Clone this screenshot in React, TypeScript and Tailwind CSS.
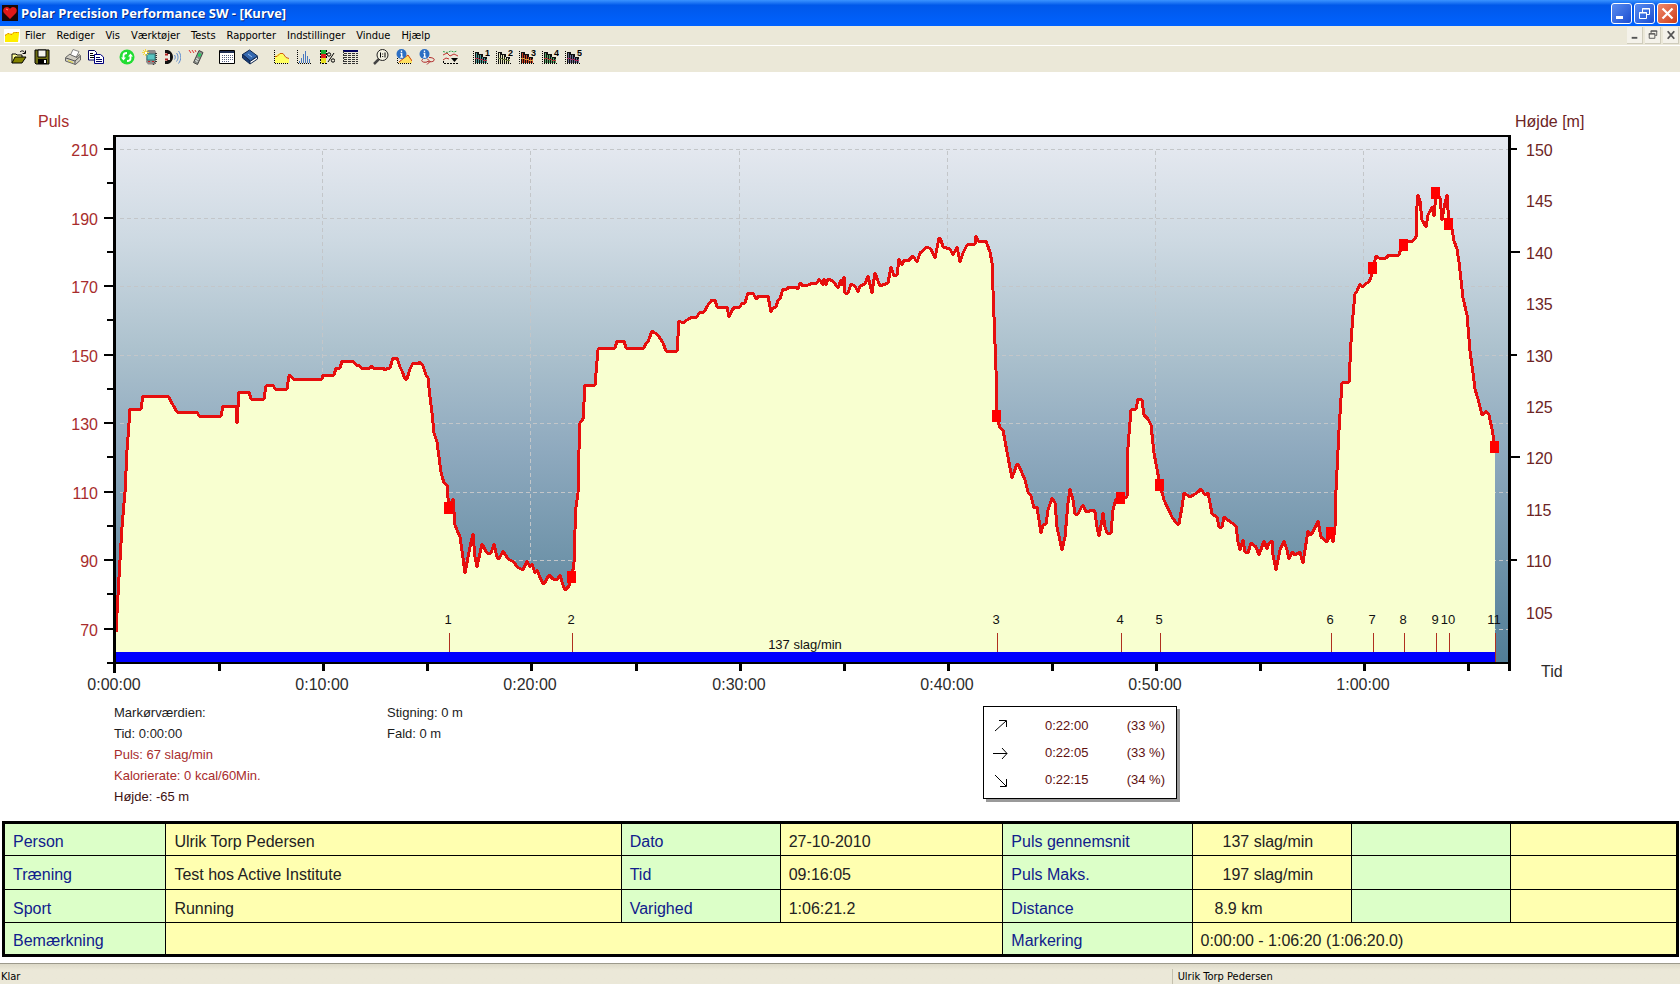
import React from 'react';

interface ToolButton {
  label: string;
  icon: React.ReactNode;
}

interface Lap {
  label: string;
  x: number;
  y: number;
}

const menuItems = ['Filer', 'Rediger', 'Vis', 'Værktøjer', 'Tests', 'Rapporter', 'Indstillinger', 'Vindue', 'Hjælp'];

/* Chart data */
const curve =
  '116,632 119,577 122,527 125,492 127,450 128,437 130,409 141,409 143,396 168,396 173,405 177,412 197,412 199,416 221,416 223,406 236,406 237,423 239,392 249,392 251,399 264,399 266,386 268,385 273,385 275,389 287,389 289,376 290,375 293,379 322,379 323,375 334,375 336,368 340,368 342,361 353,361 356,365 359,365 361,368 370,368 372,366 373,368 383,368 385,370 388,368 390,368 393,358 397,358 400,367 402,371 405,379 407,379 410,369 413,363 418,364 420,362 423,366 426,375 428,378 430,397 432,413 434,433 437,442 441,472 444,483 447,485 448,498 449,508 453,499 455,525 460,537 463,558 465,573 470,547 473,534 475,557 477,567 480,553 482,544 487,553 491,553 494,544 497,557 499,559 503,551 508,559 514,562 517,567 523,570 527,561 530,567 532,564 535,573 537,570 542,582 544,584 549,575 553,579 557,580 560,575 563,585 565,590 569,586 572,577 574,562 575,530 576,507 578,493 579,450 580,423 583,419 585,385 595,385 598,350 599,348 615,348 617,341 624,341 626,348 644,348 646,343 648,342 652,331 658,335 663,343 666,351 677,351 679,321 683,323 687,320 692,317 697,317 699,313 704,312 708,305 712,300 715,300 717,307 727,307 729,317 732,310 735,307 740,307 742,303 745,303 748,293 753,293 756,299 759,296 768,296 771,312 773,308 776,307 778,300 780,299 783,289 787,289 789,287 792,288 795,287 798,289 800,283 803,286 808,285 813,283 817,283 819,279 823,285 824,279 826,285 828,279 833,281 838,288 841,280 842,285 844,277 845,293 848,293 851,284 855,286 858,292 860,286 865,284 868,276 872,293 875,273 880,286 888,283 891,267 894,276 897,275 899,259 902,265 904,260 908,261 913,256 917,262 920,253 927,247 931,249 935,258 939,238 941,240 943,247 950,249 953,255 957,247 960,262 963,253 967,245 975,244 976,236 978,241 986,241 990,252 992,263 994,317 996,370 997,410 997,417 1000,428 1003,430 1007,452 1012,478 1017,464 1019,466 1025,480 1028,492 1031,496 1034,508 1037,507 1039,520 1041,533 1043,525 1046,524 1048,510 1052,498 1055,503 1057,527 1062,550 1065,537 1068,503 1070,489 1073,500 1075,514 1078,514 1081,508 1083,505 1086,512 1093,510 1095,512 1097,527 1099,536 1102,520 1103,513 1105,527 1107,533 1111,533 1113,510 1116,499 1121,498 1127,497 1128,447 1131,410 1136,409 1138,399 1142,400 1144,415 1148,419 1151,425 1154,453 1160,485 1164,500 1172,517 1177,524 1179,524 1182,507 1184,493 1190,497 1195,494 1198,492 1201,489 1205,495 1208,493 1210,503 1212,514 1217,517 1219,527 1222,527 1224,517 1232,523 1236,526 1238,542 1240,550 1243,540 1245,552 1248,553 1251,543 1256,547 1259,555 1264,541 1267,549 1269,543 1272,541 1273,555 1276,570 1280,550 1284,541 1287,550 1289,559 1292,552 1295,555 1300,552 1303,563 1305,550 1308,531 1310,535 1313,532 1318,521 1321,537 1327,542 1331,533 1333,542 1335,527 1336,490 1339,430 1342,383 1349,382 1351,342 1353,315 1355,294 1357,291 1360,284 1362,287 1367,283 1369,282 1371,277 1373,268 1376,256 1379,258 1386,258 1389,255 1399,255 1401,248 1404,248 1408,241 1413,241 1416,237 1416,218 1418,195 1420,201 1422,220 1426,227 1428,215 1432,207 1434,216 1436,194 1440,198 1442,220 1444,208 1447,195 1449,224 1452,229 1454,241 1457,249 1459,262 1463,298 1467,315 1470,351 1473,373 1475,389 1478,399 1482,415 1484,414 1486,411 1489,415 1492,429 1494,441 1495,447';

const laps: Lap[] = [
  { label: '1', x: 449, y: 508 },
  { label: '2', x: 572, y: 577 },
  { label: '3', x: 997, y: 416 },
  { label: '4', x: 1121, y: 498 },
  { label: '5', x: 1160, y: 485 },
  { label: '6', x: 1331, y: 533 },
  { label: '7', x: 1373, y: 268 },
  { label: '8', x: 1404, y: 245 },
  { label: '9', x: 1436, y: 193 },
  { label: '10', x: 1449, y: 224 },
  { label: '11', x: 1495, y: 447 },
];

const pulseY = (bpm: number) => Math.round(149 + (210 - bpm) * 3.425);
const heightY = (m: number) => Math.round(149 + (150 - m) * 10.28);
const timeX = (min: number) => Math.round(115 + min * 20.82);

const pulseTicks = [210, 200, 190, 180, 170, 160, 150, 140, 130, 120, 110, 100, 90, 80, 70, 60];
const pulseLabels = [210, 190, 170, 150, 130, 110, 90, 70];
const heightLabels = [150, 145, 140, 135, 130, 125, 120, 115, 110, 105];
const timeTicks = [0, 5, 10, 15, 20, 25, 30, 35, 40, 45, 50, 55, 60, 65];
const timeLabels = [0, 10, 20, 30, 40, 50, 60];

const formatTime = (min: number) => `${Math.floor(min / 60)}:${String(min % 60).padStart(2, '0')}:00`;

/* Toolbar icons */
const Icon: React.FC<{ children: React.ReactNode }> = ({ children }) => (
  <svg viewBox="0 0 16 16" className="w-4 h-4" fill="none" aria-hidden="true">
    {children}
  </svg>
);

const Axes = () => <path d="M1.5 1v13.5H16" stroke="#000" strokeDasharray="1 1" />;

const BarsIcon: React.FC<{ n: number; a: string; b: string }> = ({ n, a, b }) => (
  <svg viewBox="0 0 18 16" className="w-[18px] h-4" fill="none" aria-hidden="true">
    <path d="M1.500 2v12.500H16" stroke="#000" strokeDasharray="1 1" />
    <path d="M3 3h4v11H3zM7 5h4v9H7zM11 8h4v6h-4z" fill="#111" />
    <path d="M4 4h1v10H4zM8 6h1v8H8zM12 9h1v5h-1z" fill={a} />
    <path d="M6 6h1v8H6zM10 8h1v6h-1zM14 10h1v4h-1z" fill={a} />
    <path d="M3 9.500h4M7 10.500h4M11 11.500h4" stroke={b} />
    <text x="13" y="7" fontSize="9" fontWeight="bold" fill="#000" fontFamily="Liberation Sans, sans-serif">{n}</text>
  </svg>
);

const InfoDot = () => (
  <>
    <circle cx="5.5" cy="5" r="5" fill="#2c6fc4" />
    <path d="M5.5 1.5v1.6M4.5 4.5h1.2v3.6M4.2 8.2h3" stroke="#fff" strokeWidth="1.3" />
  </>
);

const toolGroups: ToolButton[][] = [
  [
    {
      label: 'Åbn',
      icon: (
        <Icon>
          <path d="M1 14V5h4l1 1h5v2" fill="#ffff9c" stroke="#000" />
          <path d="M1 14l3-6h11l-4 6z" fill="#848400" stroke="#000" />
          <path d="M9 3c2-2 4-1 5 1M14.500 1.500v3h-3" stroke="#000" />
        </Icon>
      ),
    },
    {
      label: 'Gem',
      icon: (
        <Icon>
          <path d="M1 1h14v14H2l-1-1z" fill="#6b6b10" stroke="#000" />
          <path d="M4 1h8v7H4z" fill="#f4f4ec" stroke="#000" />
          <path d="M4 10h9v5H4z" fill="#000" />
          <path d="M10 11h2v3h-2z" fill="#fff" />
        </Icon>
      ),
    },
  ],
  [
    {
      label: 'Udskriv',
      icon: (
        <Icon>
          <path d="M5 7l3-6.500 6 2-3 6z" fill="#fff" stroke="#888" />
          <path d="M.5 8.500L5 5l1 1 6 2.500 2-3 1.500 1V11l-5 4.500-10-3.500z" fill="#d0cdc2" stroke="#666" />
          <path d="M1 9l9 3 5-4.500M10 12v3.500" stroke="#555" />
          <path d="M3 11.500l5 2" stroke="#e0d840" />
        </Icon>
      ),
    },
    {
      label: 'Kopier',
      icon: (
        <Icon>
          <path d="M.5 1.500h6l2 2V11h-8z" fill="#fff" stroke="#000060" />
          <path d="M2 4.500h3M2 6.500h4M2 8.500h4" stroke="#000" />
          <path d="M6.500 5.500h6l3 2.500v6.500h-9z" fill="#fff" stroke="#000080" />
          <path d="M8 8.500h4M8 10.500h6M8 12.500h6" stroke="#000060" />
        </Icon>
      ),
    },
  ],
  [
    {
      label: 'Synkroniser',
      icon: (
        <Icon>
          <circle cx="8" cy="8" r="7.500" fill="#22dd33" />
          <path d="M4.500 9V6.500C4.500 5 6 4 8 4M11.500 7v2.500c0 1.500-1.500 2.500-3.500 2.500" stroke="#fff" strokeWidth="1.800" />
          <path d="M2 8.500h5l-2.500 3zM9 7.500h5l-2.500-3z" fill="#fff" />
        </Icon>
      ),
    },
    {
      label: 'Pulsur',
      icon: (
        <Icon>
          <path d="M5 1h8l1 2v10l-2 2.500H6L4 13z" fill="#8c8c8c" />
          <path d="M14 4v9l-3 3" stroke="#333" strokeDasharray="1 1" strokeWidth="2" />
          <path d="M5 5h8v6H5z" fill="#58c4c0" stroke="#307878" />
          <path d="M6 12.500h2M10 12.500h2" stroke="#c22" />
          <path d="M3.500 0v7M0 3.500h7M1 1l5 5M6 1L1 6" stroke="#f4d840" />
          <path d="M3 3h2v2H3z" fill="#fff" />
        </Icon>
      ),
    },
    {
      label: 'Infrarød',
      icon: (
        <Icon>
          <path d="M0 1h3c3 1 5 4 5 7s-2 6-5 7H0v-3h2V4H0z" fill="#111" />
          <path d="M2 5h3v6H2z" fill="#eee9e0" />
          <path d="M0 5.500h3M0 10.500h3" stroke="#b02020" strokeWidth="2" />
          <path d="M9.500 6c1 1.500 1 3 0 4.500M11.500 4c2 2.500 2 6 0 8.500M13.500 2c3 4 3 8.500 0 12.500" stroke="#5a8ad0" />
        </Icon>
      ),
    },
    {
      label: 'SonicLink',
      icon: (
        <Icon>
          <path d="M11 1.500l4 2-5.500 12-4-2z" fill="#8a8f88" stroke="#444" />
          <path d="M11 4l2.500 1-1.500 3-2.500-1z" fill="#22d060" />
          <path d="M8.500 9.500l2 1M7.500 11.500l2 1" stroke="#fff" />
          <path d="M1 1l2 3M4 1l2 3M7 1l1 2" stroke="#e03030" />
        </Icon>
      ),
    },
  ],
  [
    {
      label: 'Kalender',
      icon: (
        <Icon>
          <path d="M.5 1.500h15v13H.5z" fill="#fff" stroke="#000" />
          <path d="M1 2h14v2H1z" fill="#1a2a50" />
          <path d="M3 6.500h11M3 8.500h11M3 10.500h11M3 12.500h7" stroke="#556080" strokeDasharray="1 1" />
        </Icon>
      ),
    },
    {
      label: 'Dagbog',
      icon: (
        <Icon>
          <path d="M.5 5.500l7-4.500 8 6-7 5z" fill="#3468b0" stroke="#102850" />
          <path d="M.5 5.500V9l7.500 6v-3z" fill="#183c78" stroke="#102850" />
          <path d="M8 12.500v2.500l7.500-5V7.500z" fill="#fff" stroke="#102850" />
          <path d="M6 5l4 3" stroke="#9cc4f0" />
        </Icon>
      ),
    },
  ],
  [
    {
      label: 'Kurve',
      icon: (
        <Icon>
          <path d="M2 14V7l3-2 2-1 3 1 3 4 3 1v4z" fill="#ffff60" />
          <path d="M2 7.500h2l3-3h3l3 4 3 1" stroke="#d06010" />
          <Axes />
        </Icon>
      ),
    },
    {
      label: 'Fordeling',
      icon: (
        <Icon>
          <path d="M3.500 12v2M5.500 9v5M7.500 5v9M9.500 2v12M11.500 7v7M13.500 10v4" stroke="#4878c0" />
          <Axes />
        </Icon>
      ),
    },
    {
      label: 'Zoner',
      icon: (
        <Icon>
          <path d="M2 1h5v4H2z" fill="#18b030" />
          <path d="M2 5h5v4H2z" fill="#e02020" />
          <path d="M2 9h5v5H2z" fill="#e8e020" />
          <path d="M15 4L9 13" stroke="#000" />
          <circle cx="10" cy="5.500" r="1.700" stroke="#000" />
          <circle cx="14" cy="11.500" r="1.700" stroke="#000" />
          <path d="M1.500 1v13.500H9M7.500 1v8" stroke="#000" strokeDasharray="2 1" />
        </Icon>
      ),
    },
    {
      label: 'Tabel',
      icon: (
        <Icon>
          <path d="M1 2h15" stroke="#000060" strokeWidth="2" />
          <path d="M2 4.500h14M2 6.500h14M2 8.500h14M2 10.500h14M2 12.500h14M2 14.500h14" stroke="#333" strokeDasharray="3 1" />
          <path d="M1.500 2v13" stroke="#333" strokeDasharray="2 1" />
        </Icon>
      ),
    },
  ],
  [
    {
      label: 'Zoom 1:1',
      icon: (
        <Icon>
          <path d="M6 10l-5 5" stroke="#444" strokeWidth="2.500" />
          <circle cx="9.500" cy="6" r="5.500" fill="#f2f0e0" stroke="#222" />
          <path d="M7.500 3.500v5M12 3.500v5M9.700 4.500v1M9.700 7v1" stroke="#000" />
        </Icon>
      ),
    },
    {
      label: 'Kurveinfo',
      icon: (
        <Icon>
          <path d="M2 14l3-3 3-3 4-2 4 5v3z" fill="#ffe060" />
          <path d="M3 13l5-4 4-3 2 3 2 3" stroke="#d04010" />
          <path d="M1.500 9v5.500H16" stroke="#000" strokeDasharray="1 1" />
          <InfoDot />
        </Icon>
      ),
    },
    {
      label: 'Markeringsinfo',
      icon: (
        <Icon>
          <path d="M4 10c-3 2 0 4 4 3M10 8.500c4 0 6 1.500 5 3-1 1.500-4 1.500-7 1M8 9.500l3 3-3 3" stroke="#b02828" />
          <InfoDot />
        </Icon>
      ),
    },
    {
      label: 'Vælg kurver',
      icon: (
        <Icon>
          <path d="M1 2.500l4 1 4-1.500 3 1 3-1" stroke="#30a050" strokeDasharray="2 1" />
          <path d="M1 6l4-2 3 3 4-2 4 2" stroke="#c03030" />
          <path d="M1 11l3-2 3 1" stroke="#c03030" />
          <path d="M1.500 12v2.500H16" stroke="#000" strokeDasharray="2 1" />
          <path d="M9 9h7l-3.500 4z" fill="#000" />
        </Icon>
      ),
    },
  ],
  [
    { label: 'Visning 1', icon: <BarsIcon n={1} a="#4a9a94" b="#a83048" /> },
    { label: 'Visning 2', icon: <BarsIcon n={2} a="#e8e8b8" b="#687838" /> },
    { label: 'Visning 3', icon: <BarsIcon n={3} a="#c84020" b="#e0a040" /> },
    { label: 'Visning 4', icon: <BarsIcon n={4} a="#58a868" b="#b03838" /> },
    { label: 'Visning 5', icon: <BarsIcon n={5} a="#6a6a90" b="#a02858" /> },
  ],
];

const TitleBar = () => (
  <header className="flex h-[26px] items-center bg-linear-to-b from-[#3a93ff] via-[#0058ea] via-20% to-[#0062ff] pl-[2px] pr-[2px]">
    <svg viewBox="0 0 16 16" className="h-4 w-4 shrink-0" aria-hidden="true">
      <path d="M0 0h16v16H0z" fill="#180808" />
      <path d="M8 14L2 8C0 5 2 2 5 2c1.500 0 2.500 1 3 2 .5-1 1.500-2 3-2 3 0 5 3 3 6z" fill="#e01818" />
      <path d="M4 4l2 1" stroke="#ff9080" />
    </svg>
    <h1 className="ml-[3px] pt-px font-['Open_Sans','Noto_Sans',sans-serif] text-[13px] font-bold text-white [text-shadow:1px_1px_0_#0a2a80]">
      Polar Precision Performance SW - [Kurve]
    </h1>
    <div className="ml-auto flex gap-[2px]">
      <button aria-label="Minimer" className="flex h-[21px] w-[21px] items-center justify-center rounded-[3px] border border-white bg-linear-to-br from-[#5a8cf0] to-[#1c4cd0]">
        <svg viewBox="0 0 19 19" className="h-[19px] w-[19px]"><path d="M4 12h7v3H4z" fill="#fff" /></svg>
      </button>
      <button aria-label="Gendan" className="flex h-[21px] w-[21px] items-center justify-center rounded-[3px] border border-white bg-linear-to-br from-[#5a8cf0] to-[#1c4cd0]">
        <svg viewBox="0 0 19 19" className="h-[19px] w-[19px]" fill="none" stroke="#fff">
          <path d="M7.500 8V4.500h7v6H12M7 5h8M4.500 8.500h7v6h-7zM4 9h8" />
        </svg>
      </button>
      <button aria-label="Luk" className="flex h-[21px] w-[21px] items-center justify-center rounded-[3px] border border-white bg-linear-to-br from-[#f0896a] to-[#cc3a12]">
        <svg viewBox="0 0 19 19" className="h-[19px] w-[19px]"><path d="M4.500 4.500l10 10M14.500 4.500l-10 10" stroke="#fff" strokeWidth="2.200" /></svg>
      </button>
    </div>
  </header>
);

const MenuBar = () => (
  <nav className="flex h-5 items-center border-b border-white bg-[#ebe8d8] pl-[4px]">
    <svg viewBox="0 0 16 14" className="h-[14px] w-4 shrink-0" aria-hidden="true">
      <path d="M0 0h16v14H0z" fill="#fff" />
      <path d="M1 13V6l3-2 3 1 3-2h5v2l-1 8z" fill="#ffee00" />
      <path d="M1 6.500l3-2 4 1 2-2h5" stroke="#e08000" fill="none" strokeDasharray="2 1" />
    </svg>
    {menuItems.map((item) => (
      <button key={item} className="pr-[6px] pl-[5px] text-[11px] leading-4">
        {item}
      </button>
    ))}
    <div className="ml-auto flex gap-[2px] pr-px">
      <button aria-label="Minimer vindue" className="h-[17px] w-4 border-r border-b border-[#cfccbc] bg-[#f4f2ea]">
        <svg viewBox="0 0 16 16" className="h-4 w-[15px]"><path d="M5 10h6v2H5z" fill="#555" /></svg>
      </button>
      <button aria-label="Gendan vindue" className="h-[17px] w-4 border-r border-b border-[#cfccbc] bg-[#f4f2ea]">
        <svg viewBox="0 0 16 16" className="h-4 w-[15px]" fill="none" stroke="#555"><path d="M6.500 6V3.500h6v5H11M6 4h7M4.500 6.500h6v5h-6zM4 7h7" /></svg>
      </button>
      <button aria-label="Luk vindue" className="h-[17px] w-4 border-r border-b border-[#cfccbc] bg-[#f4f2ea]">
        <svg viewBox="0 0 16 16" className="h-4 w-[15px]"><path d="M5 4l7 8M12 4l-7 8" stroke="#555" strokeWidth="2" /></svg>
      </button>
    </div>
  </nav>
);

const ToolBar = () => (
  <div role="toolbar" className="flex h-[26px] gap-2 bg-[#ebe8d8] pl-[7px]">
    {toolGroups.map((group) => (
      <div key={group[0].label} className="flex">
        {group.map((tool) => (
          <button key={tool.label} aria-label={tool.label} className="flex h-[22px] w-[23px] items-center justify-center">
            {tool.icon}
          </button>
        ))}
      </div>
    ))}
  </div>
);

const PulseChart = () => (
  <svg viewBox="0 72 1680 630" className="block w-full font-['Liberation_Sans',Arial,sans-serif]" shapeRendering="crispEdges">
    <defs>
      <linearGradient id="sky" x1="0" y1="0" x2="0" y2="1">
        <stop offset="0" stopColor="#e7eaf1" />
        <stop offset="0.2" stopColor="#cdd9e2" />
        <stop offset="0.4" stopColor="#adc2ce" />
        <stop offset="0.6" stopColor="#8ea9be" />
        <stop offset="0.8" stopColor="#7094aa" />
        <stop offset="1" stopColor="#517d97" />
      </linearGradient>
    </defs>
    <rect x="115" y="136" width="1394" height="527" fill="url(#sky)" />

    {/* Grid */}
    <g stroke="#c3c6c9" strokeDasharray="4 3">
      {pulseLabels.map((bpm) => (
        <line key={bpm} x1="120" x2="1508" y1={pulseY(bpm) + 0.5} y2={pulseY(bpm) + 0.5} />
      ))}
      {timeLabels.slice(1).map((min) => (
        <line key={min} x1={timeX(min) - 0.5} x2={timeX(min) - 0.5} y1="151" y2="662" />
      ))}
    </g>

    {/* Pulse curve */}
    <polygon points={`116,662 ${curve} 1495,662`} fill="#f8ffd0" />
    <polyline points={curve} fill="none" stroke="#e60e0e" strokeWidth="3" strokeLinejoin="round" />
    <rect x="116" y="652" width="1379" height="10" fill="#0000ff" />

    {/* Laps */}
    {laps.map((lap) => (
      <g key={lap.label}>
        <rect x={lap.x - 5} y={lap.y - 6} width="9" height="12" fill="#ff0000" />
        <line x1={lap.x + 0.5} x2={lap.x + 0.5} y1="633" y2={lap.label === '11' ? 662 : 652} stroke="#b03020" />
        <text x={lap.x - 1} y="624" textAnchor="middle" fontSize="13" fill="#111">{lap.label}</text>
      </g>
    ))}
    <text x="805" y="649" textAnchor="middle" fontSize="13" fill="#111">137 slag/min</text>

    {/* Frame and axes */}
    <g stroke="#000">
      <path d="M114 136h1397" strokeWidth="2" />
      <path d="M114.500 135v538M1509.500 135v536" strokeWidth="3" />
      <path d="M107 663h1403" strokeWidth="2" />
      {pulseTicks.map((bpm) => (
        <line key={bpm} x1={bpm % 20 === 10 ? 104 : 107} x2="114" y1={pulseY(bpm)} y2={pulseY(bpm)} strokeWidth="2" />
      ))}
      {[150, 140, 130, 120, 110].map((m) => (
        <line key={m} x1="1510" x2={m % 20 === 0 ? 1520 : 1517} y1={heightY(m)} y2={heightY(m)} strokeWidth="2" />
      ))}
      {timeTicks.slice(1).map((min) => (
        <line key={min} x1={timeX(min)} x2={timeX(min)} y1="664" y2="671" strokeWidth="3" />
      ))}
    </g>

    {/* Labels */}
    <g fontSize="16" fill="#a82c2c">
      <text x="38" y="127">Puls</text>
      {pulseLabels.map((bpm) => (
        <text key={bpm} x="98" y={pulseY(bpm) + 7} textAnchor="end">{bpm}</text>
      ))}
    </g>
    <g fontSize="16" fill="#6c2424">
      <text x="1515" y="127">Højde [m]</text>
      {heightLabels.map((m) => (
        <text key={m} x="1526" y={heightY(m) + 7}>{m}</text>
      ))}
    </g>
    <g fontSize="16" fill="#2c2c2c">
      {timeLabels.map((min) => (
        <text key={min} x={timeX(min) - 1} y="690" textAnchor="middle">{formatTime(min)}</text>
      ))}
      <text x="1541" y="677">Tid</text>
    </g>
  </svg>
);

const zones = [
  { arrow: 'M3 14L14 4M7 3.500h7.500V10', time: '0:22:00', share: '(33 %)' },
  { arrow: 'M1 9.500h14M10 4l5 5.500L10 15', time: '0:22:05', share: '(33 %)' },
  { arrow: 'M3 4l11 11M14.500 8v7.500H8', time: '0:22:15', share: '(34 %)' },
];

const CursorInfo = () => (
  <section className="grid grid-cols-[114fr_273fr_596fr_697fr] text-[13px] leading-[21px] text-[#1c1c1c]">
    <div className="col-start-2">
      <p>Markørværdien:</p>
      <p>Tid: 0:00:00</p>
      <p className="text-[#a82c2c]">Puls: 67 slag/min</p>
      <p className="text-[#a82c2c]">Kalorierate: 0 kcal/60Min.</p>
      <p className="text-[#3c1010]">Højde: -65 m</p>
    </div>
    <div>
      <p>Stigning: 0 m</p>
      <p>Fald: 0 m</p>
    </div>
    <ul className="mt-1 flex h-[93px] w-[194px] flex-col justify-center gap-[6px] border border-black bg-white pb-px text-[#601010] shadow-[3px_3px_0_#9a9a9a]">
      {zones.map((zone) => (
        <li key={zone.time} className="flex items-center pl-2">
          <svg viewBox="0 0 17 17" className="h-[17px] w-[17px]" fill="none" stroke="#000" aria-hidden="true">
            <path d={zone.arrow} />
          </svg>
          <span className="ml-9">{zone.time}</span>
          <span className="ml-auto mr-[11px]">{zone.share}</span>
        </li>
      ))}
    </ul>
  </section>
);

const Label: React.FC<{ children?: React.ReactNode }> = ({ children }) => (
  <th scope="row" className="border border-black bg-[#dcffc8] pt-[5px] pl-2 text-left font-normal text-[#10208c]">{children}</th>
);

const Value: React.FC<{ children?: React.ReactNode; span?: number; className?: string }> = ({ children, span, className = 'pl-2' }) => (
  <td colSpan={span} className={`border border-black bg-[#ffffb0] pt-[5px] ${className}`}>{children}</td>
);

const SummaryTable = () => (
  <div className="mt-[14px] mr-px ml-[2px]">
    <table className="w-full table-fixed border-collapse border-3 border-black text-[16px] leading-6 text-[#222222]">
      <colgroup>
        <col className="w-[9.7%]" />
        <col className="w-[27.2%]" />
        <col className="w-[9.5%]" />
        <col className="w-[13.3%]" />
        <col className="w-[11.3%]" />
        <col className="w-[9.5%]" />
        <col className="w-[9.5%]" />
        <col />
      </colgroup>
      <tbody>
        <tr className="h-[33px]">
          <Label>Person</Label>
          <Value>Ulrik Torp Pedersen</Value>
          <Label>Dato</Label>
          <Value>27-10-2010</Value>
          <Label>Puls gennemsnit</Label>
          <Value className="pl-[30px]">137 slag/min</Value>
          <Label />
          <Value />
        </tr>
        <tr className="h-[34px]">
          <Label>Træning</Label>
          <Value>Test hos Active Institute</Value>
          <Label>Tid</Label>
          <Value>09:16:05</Value>
          <Label>Puls Maks.</Label>
          <Value className="pl-[30px]">197 slag/min</Value>
          <Label />
          <Value />
        </tr>
        <tr className="h-[33px]">
          <Label>Sport</Label>
          <Value>Running</Value>
          <Label>Varighed</Label>
          <Value>1:06:21.2</Value>
          <Label>Distance</Label>
          <Value className="pl-[22px]">8.9 km</Value>
          <Label />
          <Value />
        </tr>
        <tr className="h-[33px]">
          <Label>Bemærkning</Label>
          <Value span={3} />
          <Label>Markering</Label>
          <Value span={3}>0:00:00 - 1:06:20 (1:06:20.0)</Value>
        </tr>
      </tbody>
    </table>
  </div>
);

const StatusBar = () => (
  <footer className="mt-auto flex h-[21px] items-center border-t border-[#9c9a8c] bg-linear-to-b from-[#dcd9c8] to-[#ebe8d8] to-30% pt-[5px] text-[11px] leading-4">
    <span className="w-[69.8%] border-r border-[#c4c0ae] pl-px">Klar</span>
    <span className="pl-[5px]">Ulrik Torp Pedersen</span>
  </footer>
);

const App = () => (
  <div className="flex min-h-screen flex-col bg-white font-['DejaVu_Sans_Condensed','DejaVu_Sans',sans-serif] text-black">
    <TitleBar />
    <MenuBar />
    <ToolBar />
    <main className="font-['Liberation_Sans',Arial,sans-serif]">
      <PulseChart />
      <CursorInfo />
      <SummaryTable />
    </main>
    <StatusBar />
  </div>
);

export default App;
